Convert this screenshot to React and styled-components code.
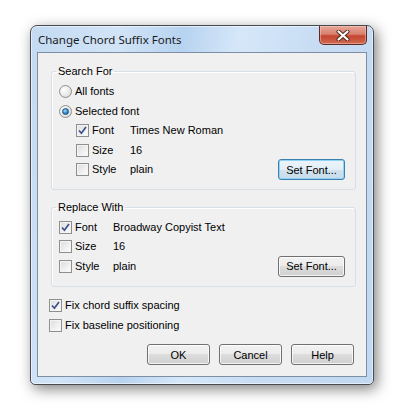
import React from 'react';
import styled, { createGlobalStyle } from 'styled-components';

const GlobalStyle = createGlobalStyle`
    body {
        margin: 0;
        background: #ffffff;
        width: 409px;
        height: 407px;
        overflow: hidden;
        font-family: "Liberation Sans", Arial, sans-serif;
        font-size: 11px;
        color: #000;
    }
`;

const Stage = styled.div`
    padding: 25px 0 0 30px;
`;

const Window = styled.div`
    width: 344px;
    height: 360px;
    box-sizing: border-box;
    display: flex;
    flex-direction: column;
    padding: 0 6px 7px 6px;
    border: 1px solid #474b50;
    border-radius: 7px 7px 5px 5px;
    background: linear-gradient(100deg, #c3daf2 0%, #d2e4f7 22%, #b7d3f0 38%, #d6e7f9 52%, #c8ddf4 70%, #c0d8f1 100%);
    box-shadow: inset 0 0 0 1px rgba(255, 255, 255, 0.55), 3px 4px 14px rgba(0, 0, 0, 0.5);
`;

const TitleBar = styled.div`
    height: 28px;
    display: flex;
    justify-content: space-between;
    align-items: flex-start;
`;

const Title = styled.div`
    margin: 6px 0 0 1px;
    font-family: "Noto Sans", "Open Sans", sans-serif;
    font-size: 11.5px;
    line-height: 16px;
    color: #1a1a1a;
`;

const CloseButton = styled.div`
    width: 46px;
    height: 18px;
    display: flex;
    align-items: center;
    justify-content: center;
    border: 1px solid #5a2a26;
    border-top: none;
    border-radius: 0 0 5px 5px;
    background: linear-gradient(#e9a799 0%, #d8806f 45%, #c5452f 55%, #d06a52 100%);
    box-shadow: inset 0 0 0 1px rgba(255, 210, 200, 0.45);
`;

const Client = styled.div`
    flex: 1;
    display: flex;
    flex-direction: column;
    padding: 12.5px 12px 11px 11px;
    border: 1px solid #7f8fa3;
    background: #f0f0f0;
`;

const Group = styled.fieldset`
    margin: ${p => (p.$first ? '0' : '10.5px')} -2px 0 2px;
    padding: 4px 10px 9.5px 7px;
    border: 1px solid #d5dfe5;
    border-radius: 3px;
    box-shadow: inset 1px 1px 0 #ffffff;
    min-width: 0;
`;

const Legend = styled.legend`
    margin-left: -3px;
    padding: 0 2px;
    font-size: 11px;
    line-height: 13px;
`;

const Row = styled.div`
    display: flex;
    align-items: center;
    height: 19.5px;
    padding-left: ${p => p.$indent || 0}px;
`;

const Label = styled.span`
    width: ${p => (p.$width ? `${p.$width}px` : 'auto')};
    line-height: 13px;
`;

const Value = styled.span`
    flex: 1;
    line-height: 13px;
`;

const Box = styled.span`
    width: 13px;
    height: 13px;
    box-sizing: border-box;
    margin-right: 3px;
    flex: none;
    display: flex;
    align-items: center;
    justify-content: center;
    border: 1px solid #8e8f8f;
    background: linear-gradient(135deg, #dcdcdc 0%, #f4f4f4 70%, #ffffff 100%);
    box-shadow: inset 0 0 0 1px #f4f4f4;
`;

const RadioRing = styled.span`
    width: 13px;
    height: 13px;
    box-sizing: border-box;
    margin-right: 3px;
    flex: none;
    display: flex;
    align-items: center;
    justify-content: center;
    border: 1px solid #8e8f8f;
    border-radius: 50%;
    background: radial-gradient(circle at 35% 35%, #ffffff 0%, #e6e6e6 60%, #cfcfcf 100%);
`;

const RadioDot = styled.span`
    width: 5px;
    height: 5px;
    border-radius: 50%;
    border: 1px solid #1c5180;
    background: radial-gradient(circle at 40% 35%, #a9dcf8 0%, #2e8ad0 55%, #15508d 100%);
`;

const Button = styled.button`
    width: ${p => p.$width || 63}px;
    height: 21px;
    padding: 0;
    flex: none;
    font-family: "Liberation Sans", Arial, sans-serif;
    font-size: 11px;
    color: #000;
    border: 1px solid ${p => (p.$focused ? '#3c7fb1' : '#707070')};
    border-radius: 3px;
    background: ${p => (p.$focused
        ? 'linear-gradient(#ecf4fa 0%, #e3eef6 50%, #d3e3ee 50%, #c6dbe9 100%)'
        : 'linear-gradient(#f2f2f2 0%, #ebebeb 50%, #dddddd 50%, #cfcfcf 100%)')};
    box-shadow: inset 0 0 0 1px ${p => (p.$focused ? '#8fd3f5' : 'rgba(255, 255, 255, 0.75)')};
`;

const Options = styled.div`
    margin-top: 9.5px;
    display: flex;
    flex-direction: column;
`;

const ButtonBar = styled.div`
    margin-top: 9px;
    display: flex;
    justify-content: flex-end;
    gap: 9px;
`;

function Check({ checked }) {
    return (
        <Box>
            {checked && (
                <svg width="9" height="9" viewBox="0 0 9 9">
                    <path d="M1 4.5 L3.4 7.2 L8 1" fill="none" stroke="#3b4f8c" strokeWidth="1.7" />
                </svg>
            )}
        </Box>
    );
}

function Radio({ checked, children }) {
    return (
        <Row>
            <RadioRing>{checked && <RadioDot />}</RadioRing>
            <Label>{children}</Label>
        </Row>
    );
}

function FontRow({ indent, checked, label, value, button, focused }) {
    return (
        <Row $indent={indent}>
            <Check checked={checked} />
            <Label $width={38}>{label}</Label>
            <Value>{value}</Value>
            {button && <Button $width={67} $focused={focused}>Set Font...</Button>}
        </Row>
    );
}

function CloseGlyph() {
    return (
        <svg width="14" height="11" viewBox="0 0 14 11">
            <path d="M2.5 1.5 L11.5 9.5 M11.5 1.5 L2.5 9.5" stroke="#4a2420" strokeWidth="4" strokeLinecap="round" />
            <path d="M2.5 1.5 L11.5 9.5 M11.5 1.5 L2.5 9.5" stroke="#ffffff" strokeWidth="2.2" strokeLinecap="round" />
        </svg>
    );
}

export default function App() {
    return (
        <Stage>
            <GlobalStyle />
            <Window>
                <TitleBar>
                    <Title>Change Chord Suffix Fonts</Title>
                    <CloseButton><CloseGlyph /></CloseButton>
                </TitleBar>
                <Client>
                    <Group $first>
                        <Legend>Search For</Legend>
                        <Radio>All fonts</Radio>
                        <Radio checked>Selected font</Radio>
                        <FontRow indent={17} checked label="Font" value="Times New Roman" />
                        <FontRow indent={17} label="Size" value="16" />
                        <FontRow indent={17} label="Style" value="plain" button focused />
                    </Group>
                    <Group>
                        <Legend>Replace With</Legend>
                        <FontRow checked label="Font" value="Broadway Copyist Text" />
                        <FontRow label="Size" value="16" />
                        <FontRow label="Style" value="plain" button />
                    </Group>
                    <Options>
                        <Row>
                            <Check checked />
                            <Label>Fix chord suffix spacing</Label>
                        </Row>
                        <Row>
                            <Check />
                            <Label>Fix baseline positioning</Label>
                        </Row>
                    </Options>
                    <ButtonBar>
                        <Button>OK</Button>
                        <Button>Cancel</Button>
                        <Button>Help</Button>
                    </ButtonBar>
                </Client>
            </Window>
        </Stage>
    );
}
